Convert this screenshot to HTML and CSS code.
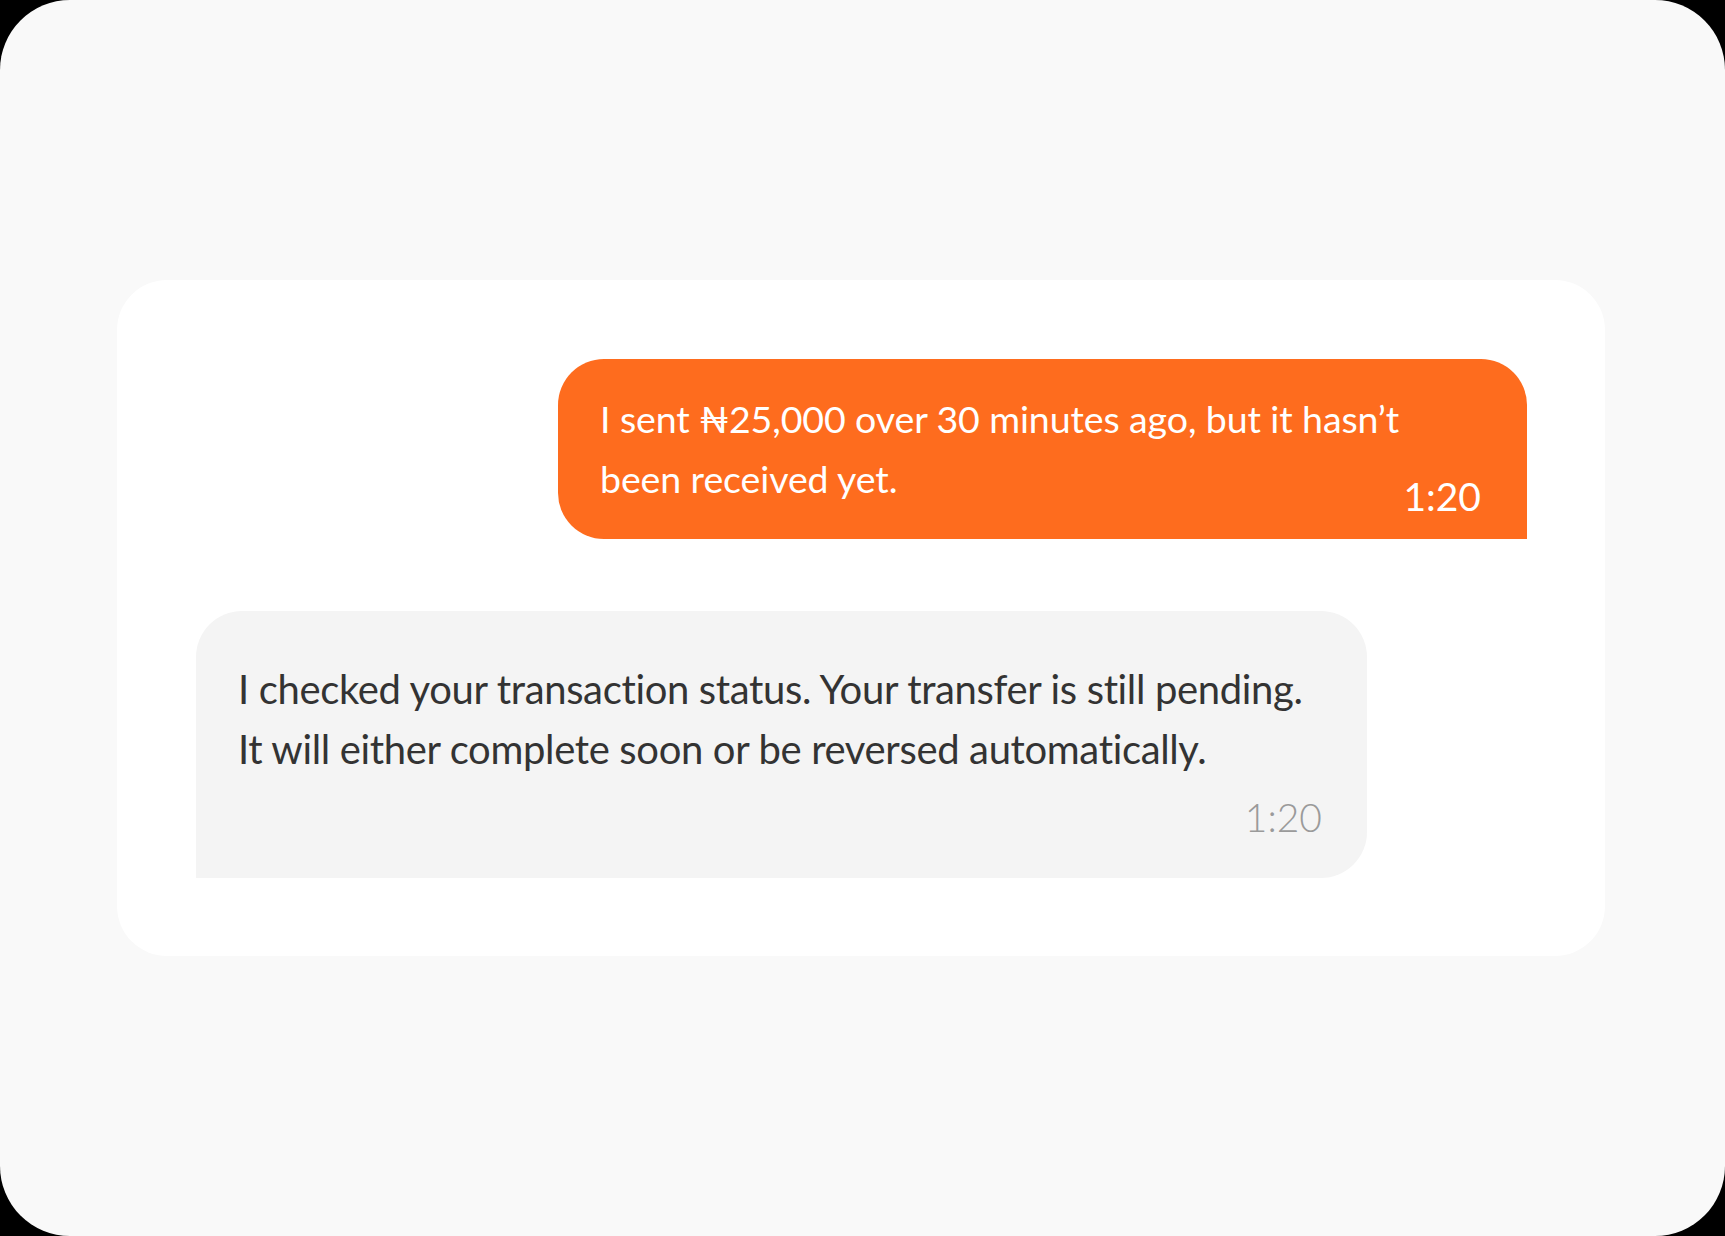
FILE: index.html
```html
<!DOCTYPE html>
<html lang="en">
<head>
<meta charset="utf-8">
<title>Chat</title>
<link rel="stylesheet" href="styles.css">
</head>
<body>
<div class="frame">
  <div class="card">
    <div class="bubble bubble-out">
      <p class="msg">I sent ₦25,000 over 30 minutes ago, but it hasn’t been received yet.</p>
      <span class="time">1:20</span>
    </div>
    <div class="bubble bubble-in">
      <p class="msg">I checked your transaction status. Your transfer is still pending. It will either complete soon or be reversed automatically.</p>
      <span class="time">1:20</span>
    </div>
  </div>
</div>
</body>
</html>
```
FILE: styles.css
```css
html, body {
  margin: 0;
  padding: 0;
  background: #000;
}
body {
  width: 1725px;
  height: 1236px;
  font-family: "Lato", "Liberation Sans", sans-serif;
}
.frame {
  width: 1725px;
  height: 1236px;
  background: #f9f9f9;
  border-radius: 70px;
  display: flex;
  align-items: center;
  justify-content: center;
  box-sizing: border-box;
  padding-right: 3px;
}
.card {
  width: 1488px;
  height: 676px;
  box-sizing: border-box;
  background: #ffffff;
  border-radius: 50px;
  padding: 79px 78px 78px 79px;
  display: flex;
  flex-direction: column;
  gap: 72px;
}
.bubble {
  box-sizing: border-box;
  padding: 0 42px;
}
.msg {
  margin: 0;
}
.bubble-out {
  align-self: flex-end;
  width: 969px;
  height: 180px;
  background: #fe6c1e;
  color: #fff;
  border-radius: 46px 46px 0 46px;
  display: flex;
  align-items: flex-end;
  justify-content: space-between;
  gap: 0;
  padding-top: 30px;
  padding-right: 46px;
}
.bubble-out .msg {
  flex: 1;
  font-size: 37.5px;
  line-height: 60px;
  align-self: flex-start;
  font-weight: 400;
  letter-spacing: -0.1px;
}
.bubble-out .time {
  font-size: 39px;
  line-height: 60px;
  margin-bottom: 13px;
  font-weight: 400;
}
.bubble-in {
  align-self: flex-start;
  width: 1171px;
  height: 267px;
  background: #f4f4f4;
  color: #333333;
  border-radius: 46px 46px 46px 0;
  display: flex;
  flex-direction: column;
  padding-top: 48px;
  padding-right: 45px;
}
.bubble-in .msg {
  font-size: 40px;
  line-height: 60px;
  letter-spacing: -0.35px;
}
.bubble-in .time {
  align-self: flex-end;
  font-size: 39px;
  line-height: 60px;
  color: #9a9a9a;
  margin-top: 8px;
  font-weight: 300;
}
```
